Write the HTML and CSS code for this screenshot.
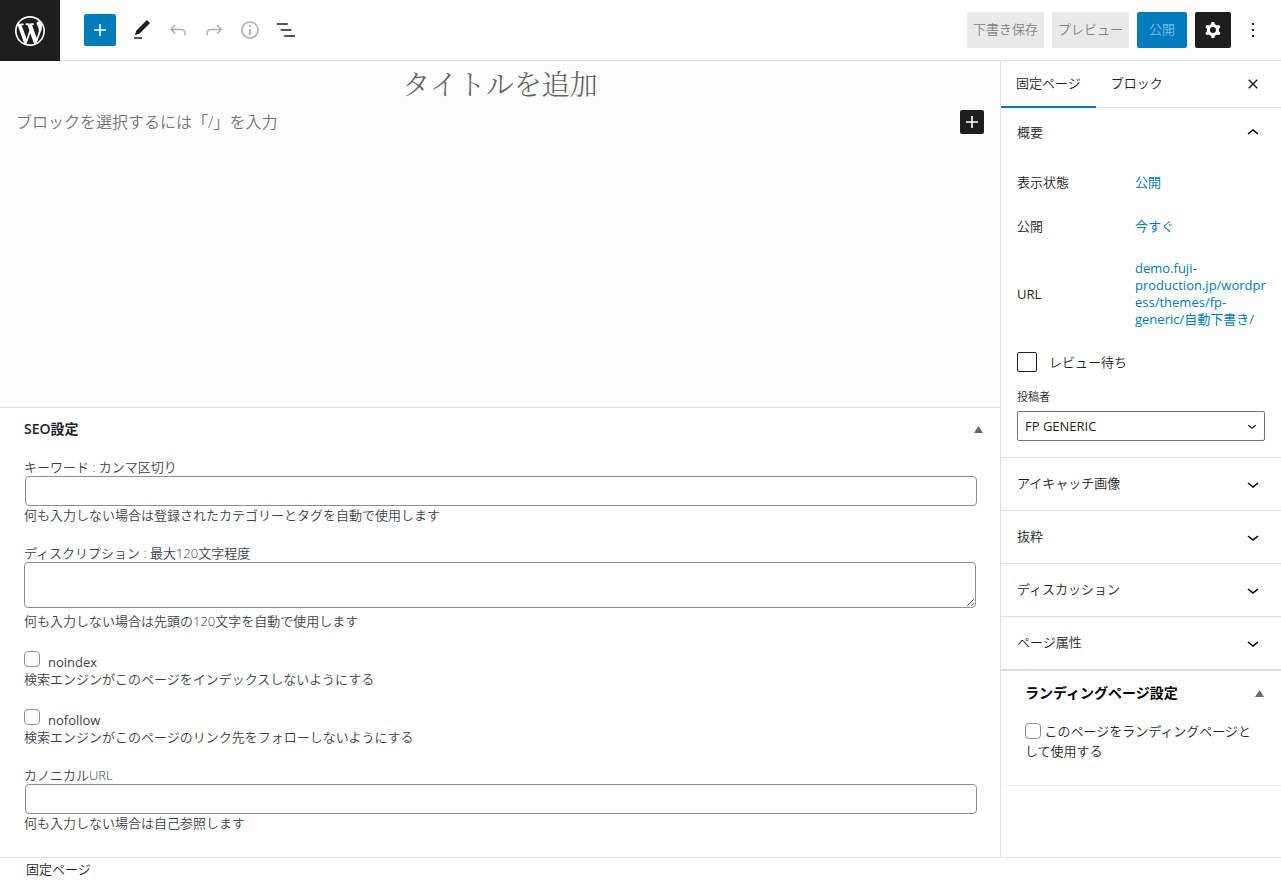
FILE: index.html
```html
<!DOCTYPE html>
<html lang="ja">
<head>
<meta charset="utf-8">
<title>固定ページ</title>
<link rel="stylesheet" href="styles.css">
</head>
<body>
<div class="app">
  <header class="topbar">
    <a class="logo" href="#" aria-label="WordPress">
      <svg width="36" height="36" viewBox="-2 -2 24 24"><path d="M20 10c0-5.51-4.49-10-10-10C4.48 0 0 4.49 0 10c0 5.52 4.48 10 10 10 5.51 0 10-4.48 10-10zM7.78 15.37L4.37 6.22c.55-.02 1.17-.08 1.17-.08.5-.06.44-1.13-.06-1.11 0 0-1.45.11-2.37.11-.18 0-.37 0-.58-.01C4.12 2.69 6.87 1.11 10 1.11c2.33 0 4.45.87 6.05 2.34-.68-.11-1.65.39-1.65 1.58 0 .74.45 1.36.9 2.1.35.61.55 1.36.55 2.46 0 1.49-1.4 5-1.4 5l-3.03-8.37c.54-.02.82-.17.82-.17.5-.05.44-1.25-.06-1.22 0 0-1.44.12-2.38.12-.87 0-2.33-.12-2.33-.12-.5-.03-.56 1.2-.06 1.22l.92.08 1.26 3.41zM17.41 10c.24-.64.74-1.87.43-4.25.7 1.29 1.05 2.71 1.05 4.25 0 3.29-1.73 6.24-4.4 7.78.97-2.59 1.94-5.2 2.92-7.78zM6.1 18.09C3.12 16.65 1.11 13.53 1.11 10c0-1.3.23-2.48.72-3.59C3.25 10.3 4.67 14.2 6.1 18.09zm4.03-6.63l2.58 6.98c-.86.29-1.76.45-2.71.45-.79 0-1.57-.11-2.29-.33.81-2.38 1.62-4.74 2.42-7.1z"/></svg>
    </a>
    <div class="tools">
      <button class="icon-btn add-btn" type="button" aria-label="ブロックを追加"><svg width="24" height="24" viewBox="0 0 24 24"><path d="M18 11.2h-5.2V6h-1.6v5.2H6v1.6h5.2V18h1.6v-5.2H18z"/></svg></button>
      <button class="icon-btn" type="button" aria-label="ツール"><svg width="24" height="24" viewBox="0 0 24 24"><path d="M20.1 5.1L16.9 2 6.2 12.7l-1.3 4.4 4.5-1.3L20.1 5.1zM4 20.8h8v-1.5H4v1.5z"/></svg></button>
      <button class="icon-btn dim" type="button" aria-label="元に戻す"><svg width="24" height="24" viewBox="0 0 24 24"><path d="M18.3 11.7c-.6-.6-1.4-.9-2.3-.9H6.7l2.9-3.3-1.1-1-4.5 5L8.5 16l1-1-2.7-2.7H16c.5 0 .9.2 1.3.5 1 1 1 3.4 1 4.5v.3h1.5v-.2c0-1.5 0-4.3-1.5-5.7z"/></svg></button>
      <button class="icon-btn dim" type="button" aria-label="やり直す"><svg width="24" height="24" viewBox="0 0 24 24"><path d="M15.6 6.5l-1.1 1 2.9 3.3H8c-.9 0-1.7.3-2.3.9-1.4 1.5-1.4 4.2-1.4 5.6v.2h1.5v-.3c0-1.1 0-3.5 1-4.5.3-.3.7-.5 1.3-.5h9.2L14.5 15l1.1 1.1 4.6-4.6-4.6-5z"/></svg></button>
      <button class="icon-btn dim" type="button" aria-label="詳細"><svg width="24" height="24" viewBox="0 0 24 24"><path d="M12 3.2c-4.8 0-8.8 3.9-8.8 8.8 0 4.8 3.9 8.8 8.8 8.8 4.8 0 8.8-3.9 8.8-8.8 0-4.8-4-8.8-8.8-8.8zm0 16c-4 0-7.2-3.3-7.2-7.2C4.8 8 8 4.8 12 4.8s7.2 3.3 7.2 7.2c0 4-3.2 7.2-7.2 7.2zM11 17h2v-6h-2v6zm0-8h2V7h-2v2z"/></svg></button>
      <button class="icon-btn" type="button" aria-label="リスト表示"><svg width="24" height="24" viewBox="0 0 24 24"><path d="M13.8 5.2H3v1.5h10.8V5.2zm-3.6 12v1.5H21v-1.5H10.2zm7.2-6H6.6v1.5h10.8v-1.5z"/></svg></button>
    </div>
    <div class="actions">
      <button class="btn" type="button">下書き保存</button>
      <button class="btn" type="button">プレビュー</button>
      <button class="btn primary" type="button">公開</button>
      <button class="btn dark" type="button" aria-label="設定"><svg width="24" height="24" viewBox="0 0 24 24"><path fill-rule="evenodd" d="M10.289 4.836A1 1 0 0111.275 4h1.306a1 1 0 01.987.836l.244 1.466c.787.26 1.503.679 2.108 1.218l1.393-.522a1 1 0 011.216.437l.653 1.13a1 1 0 01-.23 1.273l-1.148.944a6.025 6.025 0 010 2.435l1.149.946a1 1 0 01.23 1.272l-.653 1.13a1 1 0 01-1.216.437l-1.394-.522c-.605.54-1.32.958-2.108 1.218l-.244 1.466a1 1 0 01-.987.836h-1.306a1 1 0 01-.986-.836l-.244-1.466a5.995 5.995 0 01-2.108-1.218l-1.394.522a1 1 0 01-1.217-.436l-.653-1.131a1 1 0 01.23-1.272l1.149-.946a6.026 6.026 0 010-2.435l-1.148-.944a1 1 0 01-.23-1.272l.653-1.131a1 1 0 011.217-.437l1.393.522a5.994 5.994 0 012.108-1.218l.244-1.466zM14.929 12a3 3 0 11-6 0 3 3 0 016 0z"/></svg></button>
      <button class="icon-btn more" type="button" aria-label="オプション"><svg width="24" height="24" viewBox="0 0 24 24"><path d="M13 19h-2v-2h2v2zm0-6h-2v-2h2v2zm0-6h-2V5h2v2z"/></svg></button>
    </div>
  </header>

  <div class="body">
    <main class="content">
      <section class="canvas">
        <h1 class="post-title">タイトルを追加</h1>
        <div class="block-row">
          <p class="prompt">ブロックを選択するには「/」を入力</p>
          <button class="inserter" type="button" aria-label="ブロックを追加"><svg width="24" height="24" viewBox="0 0 24 24"><path d="M18 11.2h-5.2V6h-1.6v5.2H6v1.6h5.2V18h1.6v-5.2H18z"/></svg></button>
        </div>
      </section>

      <section class="metabox">
        <div class="metabox-head">
          <h2 class="metabox-title">SEO設定</h2>
          <svg class="tri" width="9" height="7" viewBox="0 0 9 7"><path d="M4.500 0L9 7H0z"/></svg>
        </div>
        <div class="fields">
          <div class="field">
            <label for="kw">キーワード : カンマ区切り</label>
            <input class="text" id="kw" type="text">
            <p>何も入力しない場合は登録されたカテゴリーとタグを自動で使用します</p>
          </div>
          <div class="field">
            <label for="desc">ディスクリプション : 最大120文字程度</label>
            <textarea class="area" id="desc"></textarea>
            <p>何も入力しない場合は先頭の120文字を自動で使用します</p>
          </div>
          <div class="field">
            <div class="check-row"><input class="check" id="noindex" type="checkbox"><label for="noindex">noindex</label></div>
            <p>検索エンジンがこのページをインデックスしないようにする</p>
          </div>
          <div class="field">
            <div class="check-row"><input class="check" id="nofollow" type="checkbox"><label for="nofollow">nofollow</label></div>
            <p>検索エンジンがこのページのリンク先をフォローしないようにする</p>
          </div>
          <div class="field">
            <label for="canon">カノニカルURL</label>
            <input class="text" id="canon" type="text">
            <p>何も入力しない場合は自己参照します</p>
          </div>
        </div>
      </section>
    </main>

    <aside class="sidebar">
      <div class="tabs">
        <button class="tab active" type="button">固定ページ</button>
        <button class="tab" type="button">ブロック</button>
        <button class="icon-btn close" type="button" aria-label="閉じる"><svg width="24" height="24" viewBox="0 0 24 24"><path d="M12 13.060l3.712 3.713 1.061-1.060L13.061 12l3.712-3.712-1.060-1.060L12 10.938 8.288 7.227l-1.061 1.060L10.939 12l-3.712 3.712 1.060 1.061L12 13.061z"/></svg></button>
      </div>

      <section class="panel">
        <button class="panel-toggle open" type="button"><span>概要</span><svg width="24" height="24" viewBox="0 0 24 24"><path d="M6.500 12.400L12 8l5.500 4.400-.9 1.200L12 10l-4.500 3.600-1-1.200z"/></svg></button>
        <div class="panel-body">
          <div class="row"><span>表示状態</span><a href="#">公開</a></div>
          <div class="row"><span>公開</span><a href="#">今すぐ</a></div>
          <div class="row url"><span>URL</span><a href="#">demo.fuji-production.jp/wordpress/themes/fp-generic/自動下書き/</a></div>
          <div class="review"><input class="check big" id="review" type="checkbox"><label for="review">レビュー待ち</label></div>
          <label class="small-label" for="author">投稿者</label>
          <div class="select-wrap">
            <select class="select" id="author"><option>FP GENERIC</option></select>
            <svg class="select-arrow" width="18" height="18" viewBox="0 0 24 24"><path d="M17.500 11.600L12 16l-5.500-4.400.9-1.200L12 14l4.500-3.600 1 1.200z"/></svg>
          </div>
        </div>
      </section>
      <section class="panel"><button class="panel-toggle" type="button"><span>アイキャッチ画像</span><svg width="24" height="24" viewBox="0 0 24 24"><path d="M17.500 11.600L12 16l-5.500-4.400.9-1.200L12 14l4.500-3.600 1 1.200z"/></svg></button></section>
      <section class="panel"><button class="panel-toggle" type="button"><span>抜粋</span><svg width="24" height="24" viewBox="0 0 24 24"><path d="M17.500 11.600L12 16l-5.500-4.400.9-1.200L12 14l4.500-3.600 1 1.200z"/></svg></button></section>
      <section class="panel"><button class="panel-toggle" type="button"><span>ディスカッション</span><svg width="24" height="24" viewBox="0 0 24 24"><path d="M17.500 11.600L12 16l-5.500-4.400.9-1.200L12 14l4.500-3.600 1 1.200z"/></svg></button></section>
      <section class="panel last"><button class="panel-toggle" type="button"><span>ページ属性</span><svg width="24" height="24" viewBox="0 0 24 24"><path d="M17.500 11.600L12 16l-5.500-4.400.9-1.200L12 14l4.500-3.600 1 1.200z"/></svg></button></section>

      <section class="landing">
        <div class="landing-head">
          <h2 class="landing-title">ランディングページ設定</h2>
          <svg class="tri" width="9" height="7" viewBox="0 0 9 7"><path d="M4.500 0L9 7H0z"/></svg>
        </div>
        <p class="landing-text"><input class="check" id="lp" type="checkbox"> <label for="lp">このページをランディングページとして使用する</label></p>
      </section>
    </aside>
  </div>

  <footer class="footer">固定ページ</footer>
</div>
</body>
</html>
```
FILE: styles.css
```css
* { box-sizing: border-box; }
body, h1, h2, p { margin: 0; }
body {
  font-family: "Open Sans", "Noto Sans CJK JP", sans-serif;
  font-size: 13px;
  font-weight: 350;
  line-height: 18px;
  color: #1e1e1e;
  background: #fff;
}
button, input, select, textarea { font: inherit; color: inherit; margin: 0; }
button { border: 0; padding: 0; background: none; cursor: pointer; }
svg { display: block; fill: currentColor; flex: none; }
a { color: #007cba; text-decoration: none; }

.app { display: flex; flex-direction: column; min-height: 100vh; }

.topbar { display: flex; align-items: center; height: 61px; border-bottom: 1px solid #e0e0e0; }
.logo {
  display: flex; align-items: center; justify-content: center;
  width: 60px; height: 61px; align-self: flex-start;
  background: #1e1e1e; color: #fff;
}
.tools { display: flex; gap: 4px; padding-left: 24px; }
.icon-btn { display: flex; align-items: center; justify-content: center; width: 32px; height: 32px; }
.add-btn { background: #007cba; color: #fff; border-radius: 2px; margin-right: 6px; }
.dim { color: #b0b0b0; }
.actions { display: flex; align-items: center; gap: 8px; margin-left: auto; padding-right: 12px; }
.btn {
  display: flex; align-items: center; justify-content: center;
  height: 36px; padding: 0 6px 2px; border-radius: 2px;
  background: #e9e9e9; color: #828282;
}
.primary { padding: 0 12px 2px; background: #007cba; color: #7fc0e2; }
.dark { padding: 0 6px; background: #1e1e1e; color: #fff; }
.more { margin-left: -2px; }

.body { display: flex; flex: 1; }
.content { display: flex; flex-direction: column; flex: 1; min-width: 0; }
.canvas { flex: 1; min-height: 200px; padding: 2px 16px; background: #fcfcfc; }
.post-title {
  font-family: "Noto Serif CJK JP", "Noto Sans CJK JP", serif;
  font-size: 28px; font-weight: 300; line-height: 40px;
  text-align: center; color: #606060;
}
.block-row { display: flex; align-items: center; justify-content: space-between; padding-top: 7px; }
.prompt { font-size: 16px; line-height: 24px; color: #757575; }
.inserter { width: 24px; height: 24px; background: #1e1e1e; color: #fff; border-radius: 2px; }

.metabox { padding: 0 24px 25px; border-top: 1px solid #e0e0e0; color: #3c434a; }
.metabox-head { display: flex; align-items: center; justify-content: space-between; height: 44px; margin-right: -7px; }
.metabox-title { padding-bottom: 2px; font-size: 14px; font-weight: 600; color: #1d2327; }
.metabox-head .tri { margin-bottom: 2px; }
.tri { color: #646970; }
.fields { display: grid; gap: 20px; padding-top: 6px; }
.field > label { display: block; }
.text, .area { display: block; border: 1px solid #8c8f94; border-radius: 4px; background: #fff; }
.text { width: 100%; height: 30px; margin-left: 1px; padding: 0 8px; }
.area { width: 100%; height: 46px; margin-bottom: 4px; padding: 2px 6px; }
.check {
  appearance: none; flex: none; width: 16px; height: 16px;
  border: 1px solid #8c8f94; border-radius: 4px; background: #fff;
}
.check-row { display: flex; align-items: flex-start; gap: 8px; height: 20px; padding-top: 1px; }
.check-row label { padding-top: 2px; font-weight: 400; }

.sidebar { flex: none; width: 281px; border-left: 1px solid #e0e0e0; }
.tabs { display: flex; height: 47px; border-bottom: 1px solid #e0e0e0; padding-right: 12px; }
.tab { padding: 0 15px 4px; height: 47px; }
.active { border-bottom: 2px solid #007cba; padding-bottom: 2px; }
.close { margin-left: auto; height: 46px; }
.panel { border-bottom: 1px solid #e0e0e0; }
.last { border-bottom-width: 2px; border-bottom-color: #dcdcde; }
.panel-toggle {
  display: flex; align-items: center; justify-content: space-between;
  width: 100%; height: 52px; padding: 0 16px; text-align: left;
}
.panel-toggle.open { height: 50px; }
.panel-toggle span { padding-bottom: 2px; }
.panel-toggle svg { color: #000; }
.panel-body { padding: 6px 16px 16px; }
.row { display: grid; grid-template-columns: 118px 1fr; align-items: center; min-height: 36px; margin-bottom: 8px; }
.row a { overflow-wrap: anywhere; line-height: 17px; font-weight: 400; }
.url { min-height: 84px; margin: 0 -8px 0 0; font-weight: 400; }
.review { display: flex; align-items: center; gap: 12px; padding: 16px 0; }
.big { width: 20px; height: 20px; border-color: #1e1e1e; border-radius: 2px; }
.small-label { display: block; font-size: 11px; line-height: 18px; margin-bottom: 5px; }
.select-wrap { position: relative; }
.select {
  appearance: none; display: block; width: 100%; height: 30px; padding: 0 26px 0 7px;
  border: 1px solid #757575; border-radius: 2px; background: #fff; font-weight: 400;
}
.select-arrow { position: absolute; right: 4px; top: 6px; pointer-events: none; }

.landing { padding: 0 24px 24px; border-bottom: 1px solid #f0f0f0; }
.landing-head { display: flex; align-items: center; justify-content: space-between; height: 44px; margin-right: -7px; }
.landing-title { font-size: 14px; font-weight: 700; color: #000; }
.landing-text { padding-top: 6px; line-height: 20px; margin-right: -6px; }
.landing-text .check { vertical-align: -3px; }

.footer { height: 25px; padding: 2px 26px; border-top: 1px solid #e0e0e0; }
```
